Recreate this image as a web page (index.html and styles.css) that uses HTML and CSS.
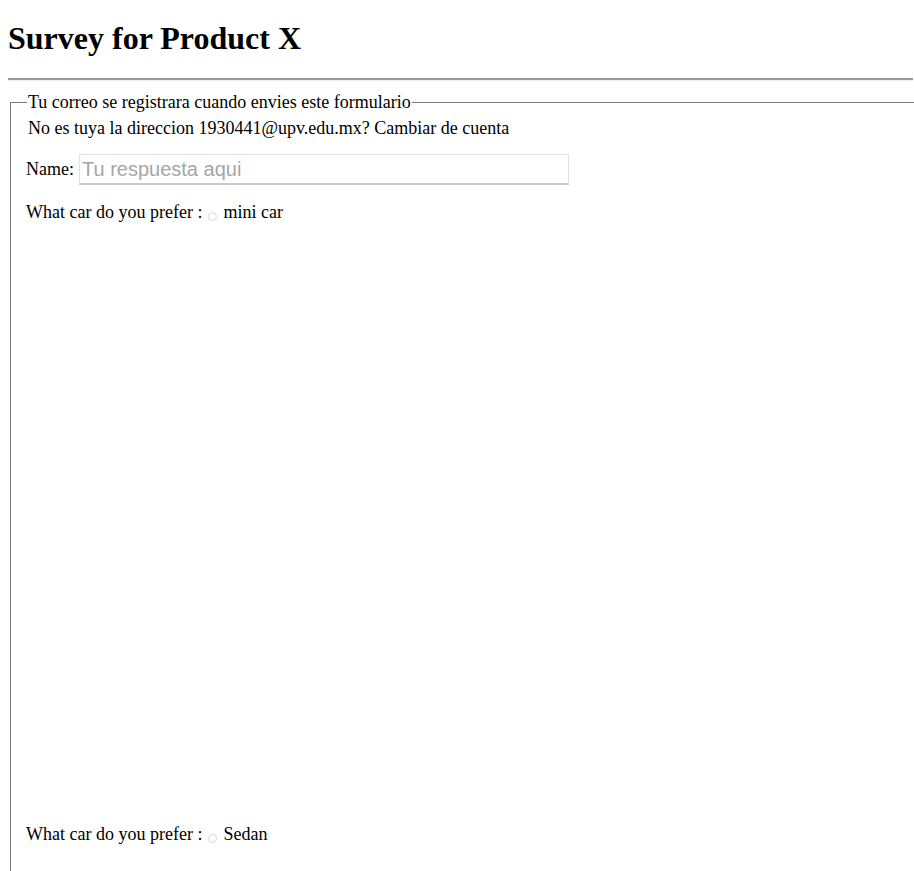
FILE: index.html
```html
<!DOCTYPE html>
<html lang="es">
<head>
<meta charset="utf-8">
<title>Survey for Product X</title>
<link rel="stylesheet" href="styles.css">
</head>
<body>
<h1 class="title">Survey for Product X</h1>
<hr class="rule">
<form class="survey">
  <fieldset class="box">
    <legend class="box-legend">Tu correo se registrara cuando envies este formulario</legend>
    <p class="account">No es tuya la direccion 1930441@upv.edu.mx? Cambiar de cuenta</p>
    <div class="row name-row">
      <label class="label" for="name">Name:</label>
      <input class="text-input" id="name" type="text" placeholder="Tu respuesta aqui">
    </div>
    <div class="row choice-row">
      <span class="label">What car do you prefer :</span>
      <input class="radio" type="radio" name="car" id="mini"><label for="mini">mini car</label>
    </div>
    <div class="spacer"></div>
    <div class="row choice-row">
      <span class="label">What car do you prefer :</span>
      <input class="radio" type="radio" name="car" id="sedan"><label for="sedan">Sedan</label>
    </div>
  </fieldset>
</form>
</body>
</html>
```

FILE: styles.css
```css
html {
  overflow: hidden;
  background: #fff;
}
body {
  margin: 8px;
  font-family: "Liberation Serif", "Times New Roman", serif;
  font-size: 18px;
  color: #000;
  width: 930px;
}
.title {
  font-size: 32px;
  font-weight: bold;
  margin: 12px 0 0;
  line-height: 37px;
}
.rule {
  width: 905px;
  margin: 21px 0 0;
  height: 0;
  border: none;
  border-top: 2px solid #9a9a9a;
  border-bottom: 1px solid #eeeeee;
}
.survey {
  margin: 0;
}
.box {
  margin: 11px 0 0 2px;
  padding: 0 15px 40px 15px;
  border: 1px solid #7a7a7a;
  min-width: 0;
}
.box-legend {
  padding: 0 1px 0 1px;
  margin-left: 1px;
  line-height: 21px;
}
.account {
  margin: 5px 0 0 2px;
  line-height: 21px;
}
.row {
  display: flex;
  align-items: center;
}
.label {
  line-height: 21px;
}
.name-row {
  margin-top: 15px;
  gap: 5px;
}
.text-input {
  width: 490px;
  height: 31px;
  box-sizing: border-box;
  border: 1px solid #e2e2e2;
  border-bottom: 2px solid #c8c8c8;
  padding: 0 2px;
  font-family: "Liberation Sans", Arial, sans-serif;
  font-size: 20px;
  color: #333;
  outline: none;
}
.text-input::placeholder {
  color: #a6a6a6;
}
.choice-row {
  margin-top: 17px;
  line-height: 21px;
}
.radio {
  appearance: none;
  -webkit-appearance: none;
  width: 9px;
  height: 9px;
  margin: 7px 6px 0 6px;
  border: 1px solid #d6d6d6;
  border-radius: 50%;
  background: #fff;
}
.spacer {
  height: 584px;
}
```
